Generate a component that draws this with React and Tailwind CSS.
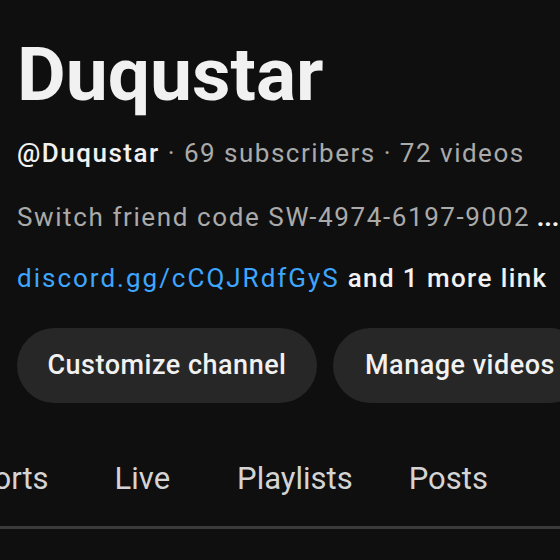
export default function App() {
  return (
    <div
      className="w-[560px] h-[560px] overflow-hidden bg-[#0f0f0f] text-[#f1f1f1]"
      style={{ fontFamily: "Roboto, Arial, sans-serif" }}
    >
      <div className="pl-[17px] pt-[34px]">
        <h1 className="text-[75px] font-bold leading-[80px] whitespace-nowrap">
          Duqustar
        </h1>
        <div className="mt-[21px] text-[26px] leading-[36px] tracking-[1.5px] whitespace-nowrap text-[#aaaaaa]">
          <span className="font-medium text-[#f1f1f1]">@Duqustar</span>
          <span> · 69 subscribers · 72 videos</span>
        </div>
        <div className="mt-[28px] text-[26px] leading-[36px] tracking-[1.6px] whitespace-nowrap text-[#aaaaaa]">
          Switch friend code SW-4974-6197-9002
          <span className="font-bold text-[#f1f1f1] tracking-[0px]"> ...more</span>
        </div>
        <div className="mt-[25px] text-[26px] leading-[36px] whitespace-nowrap">
          <span className="text-[#3ea6ff] tracking-[2px]">discord.gg/cCQJRdfGyS</span>
          <span className="font-medium text-[#f1f1f1] tracking-[1.4px]"> and 1 more link</span>
        </div>
        <div className="mt-[32px] flex gap-[16px] whitespace-nowrap">
          <button className="shrink-0 h-[75px] w-[300px] rounded-full bg-[#272727] text-[27px] tracking-[0.5px] font-medium text-[#f1f1f1]">
            Customize channel
          </button>
          <button className="shrink-0 h-[75px] px-[32px] rounded-full bg-[#272727] text-[27px] tracking-[0.5px] font-medium text-[#f1f1f1]">
            Manage videos
          </button>
        </div>
      </div>
      <div className="mt-[41px] border-b-[3px] border-[#3a3a3a]">
        <div className="flex ml-[-42px] whitespace-nowrap h-[82px] items-center pb-[12px] text-[31px] text-[#d4d4d4]">
          <div className="mr-[66px]">Shorts</div>
          <div className="mr-[67px]">Live</div>
          <div className="mr-[56px]">Playlists</div>
          <div>Posts</div>
        </div>
      </div>
    </div>
  );
}
